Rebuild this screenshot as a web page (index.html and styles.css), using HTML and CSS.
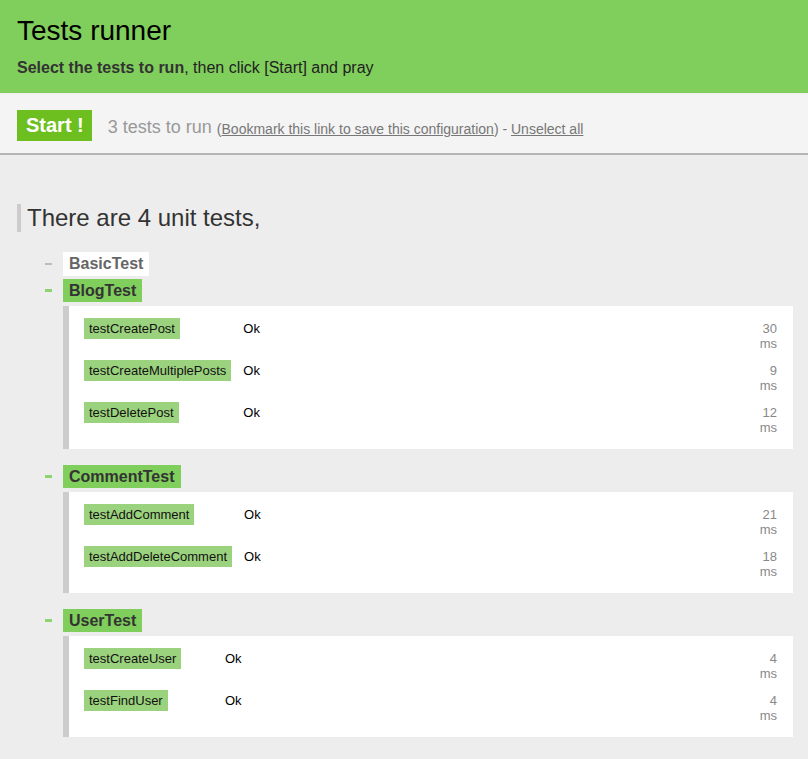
FILE: index.html
```html
<!DOCTYPE html>
<html>
<head>
<meta charset="utf-8">
<title>Tests runner</title>
<link rel="stylesheet" href="styles.css">
</head>
<body>
<header class="top">
  <h1 class="title">Tests runner</h1>
  <p class="subtitle"><strong>Select the tests to run</strong>, then click [Start] and pray</p>
</header>
<div class="toolbar">
  <span class="start">Start !</span>
  <span class="count">3 tests to run</span>
  <span class="links">(<a href="#">Bookmark this link to save this configuration</a>) - <a href="#">Unselect all</a></span>
</div>
<main class="content">
  <h2 class="heading">There are 4 unit tests,</h2>
  <ul class="groups">
    <li class="group">
      <span class="dash dash-off"></span>
      <div class="group-body">
        <span class="label label-off">BasicTest</span>
      </div>
    </li>
    <li class="group">
      <span class="dash"></span>
      <div class="group-body">
        <span class="label">BlogTest</span>
        <div class="results">
          <span class="name">testCreatePost</span><span class="status">Ok</span><span class="time">30 ms</span>
          <span class="name">testCreateMultiplePosts</span><span class="status">Ok</span><span class="time">9 ms</span>
          <span class="name">testDeletePost</span><span class="status">Ok</span><span class="time">12 ms</span>
        </div>
      </div>
    </li>
    <li class="group">
      <span class="dash"></span>
      <div class="group-body">
        <span class="label">CommentTest</span>
        <div class="results">
          <span class="name">testAddComment</span><span class="status">Ok</span><span class="time">21 ms</span>
          <span class="name">testAddDeleteComment</span><span class="status">Ok</span><span class="time">18 ms</span>
        </div>
      </div>
    </li>
    <li class="group">
      <span class="dash"></span>
      <div class="group-body">
        <span class="label">UserTest</span>
        <div class="results">
          <span class="name">testCreateUser</span><span class="status">Ok</span><span class="time">4 ms</span>
          <span class="name">testFindUser</span><span class="status">Ok</span><span class="time">4 ms</span>
        </div>
      </div>
    </li>
  </ul>
</main>
</body>
</html>
```
FILE: styles.css
```css
html, body {
  margin: 0;
  padding: 0;
}
body {
  background: #ededed;
  font-family: "Liberation Sans", Arial, sans-serif;
  color: #333;
}
.top {
  background: #80ce5b;
  padding: 15px 17px 0;
  height: 78px;
}
.title {
  margin: 0;
  font-size: 28px;
  line-height: 32px;
  font-weight: normal;
  color: #000;
}
.subtitle {
  margin: 12px 0 0;
  font-size: 16px;
  line-height: 18px;
  color: #222;
}
.subtitle strong {
  color: #333;
}
.toolbar {
  background: #f4f4f4;
  border-bottom: 2px solid #b4b4b4;
  height: 61px;
  padding: 0 17px;
  display: flex;
  align-items: center;
  box-sizing: border-box;
  margin-top: 1px;
}
.start {
  background: #6cbf1e;
  color: #fff;
  font-weight: bold;
  font-size: 20px;
  line-height: 31px;
  padding: 0 8px 0 9px;
  margin-top: 4px;
}
.count {
  margin-left: 16px;
  font-size: 18px;
  color: #999;
  margin-top: 8px;
}
.links {
  margin-left: 5px;
  font-size: 14px;
  color: #777;
  margin-top: 10px;
}
.links a {
  color: #777;
  text-decoration: underline;
}
.content {
  padding: 49px 15px 22px 17px;
}
.heading {
  margin: 0;
  border-left: 4px solid #ccc;
  padding-left: 6px;
  font-size: 24px;
  line-height: 28px;
  font-weight: normal;
  color: #333;
}
.groups {
  list-style: none;
  margin: 20px 0 0;
  padding: 0 0 0 28px;
}
.group {
  display: flex;
  margin-bottom: 3px;
}
.dash {
  width: 7px;
  height: 3px;
  background: #8fd270;
  margin-top: 10px;
  margin-right: 11px;
  flex: none;
}
.dash-off {
  background: #bdbdbd;
  height: 2px;
  margin-top: 11px;
}
.group-body {
  flex: 1;
}
.label {
  display: inline-block;
  background: #80ce5b;
  color: #333;
  font-weight: bold;
  font-size: 16px;
  line-height: 23px;
  padding: 0 6px;
}
.label-off {
  background: #fff;
  color: #666;
  line-height: 24px;
}
.results {
  margin: 4px 0 13px;
  background: #fff;
  border-left: 6px solid #ccc;
  padding: 12px 16px 14px 15px;
  display: grid;
  grid-template-columns: minmax(129px, max-content) 1fr min-content;
  column-gap: 12px;
  row-gap: 9px;
  align-items: start;
  font-size: 13px;
}
.name {
  justify-self: start;
  background: #9bd27e;
  color: #111;
  line-height: 21px;
  padding: 0 5px;
}
.status {
  line-height: 21px;
  color: #000;
}
.time {
  margin-top: 3px;
  line-height: 15px;
  text-align: right;
  color: #888;
  width: min-content;
  justify-self: end;
}
```
